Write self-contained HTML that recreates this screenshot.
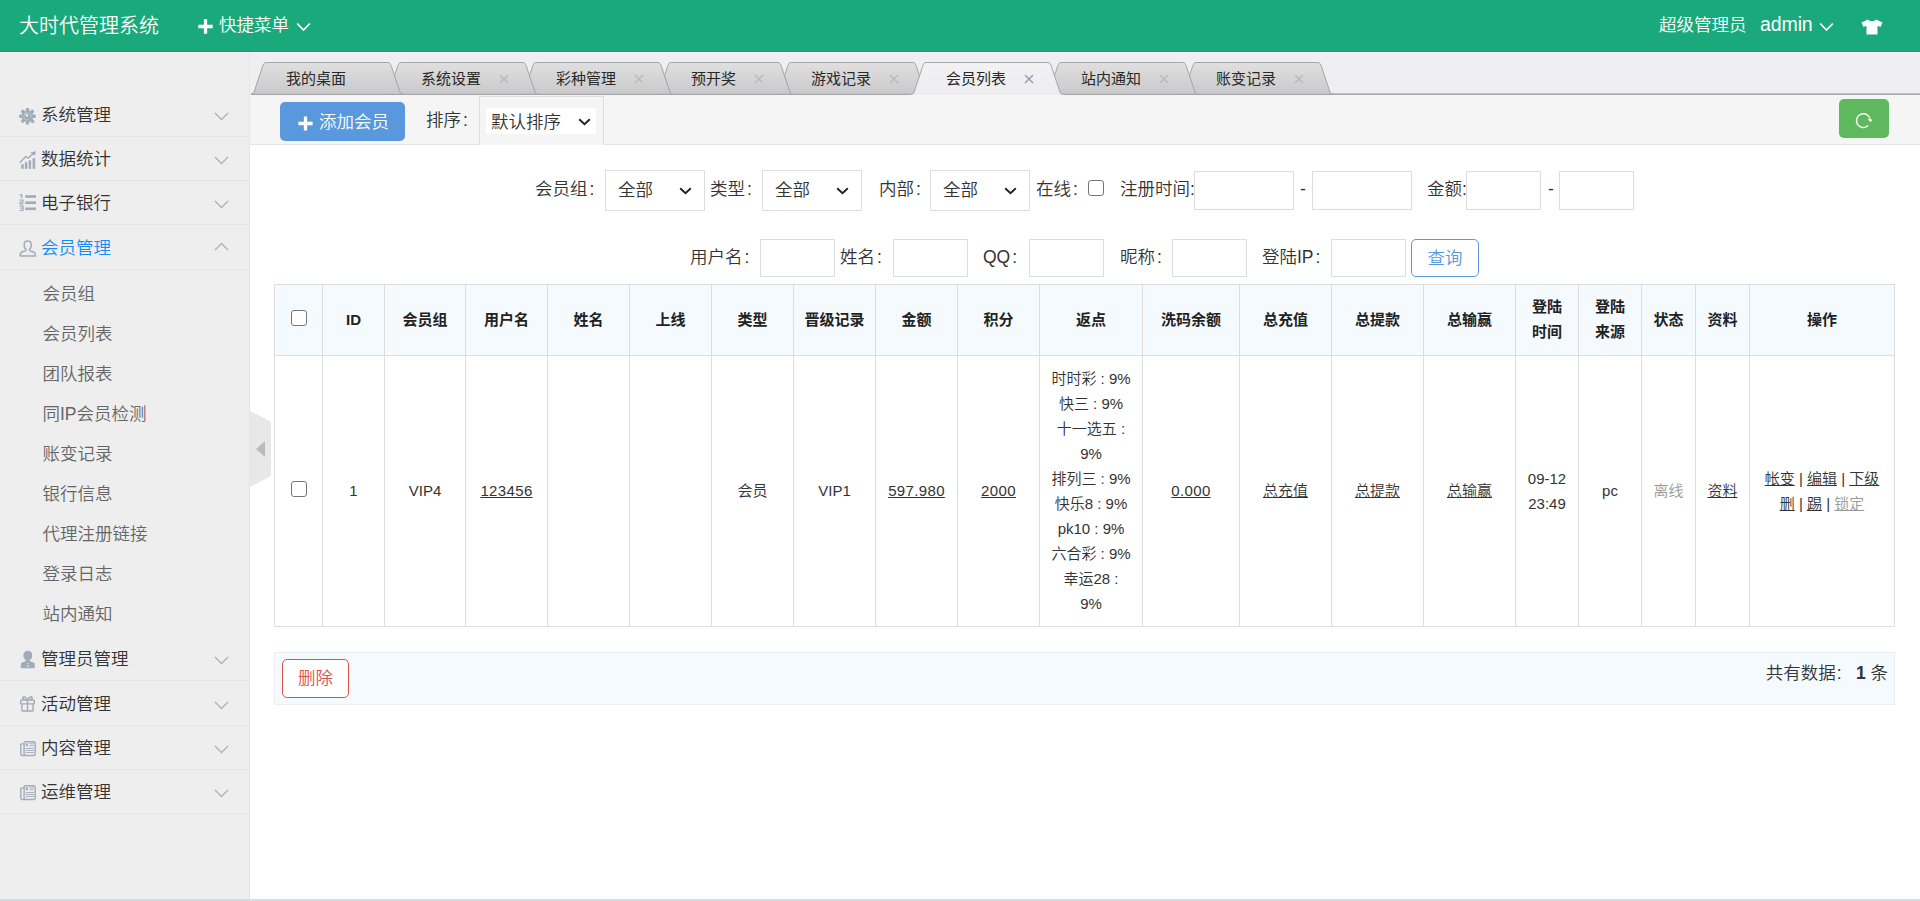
<!DOCTYPE html>
<html lang="zh-CN">
<head>
<meta charset="utf-8">
<title>大时代管理系统</title>
<style>
*{box-sizing:border-box;margin:0;padding:0}
html,body{width:1920px;height:901px;overflow:hidden;background:#fff}
body{font-family:"Liberation Sans","Noto Sans CJK SC",sans-serif;color:#333;font-size:17.5px;font-weight:350;position:relative}
.abs{position:absolute}
a{color:#333}
b{font-weight:700}
/* header */
#hd{position:absolute;left:0;top:0;width:1920px;height:52px;background:#1aa97b;color:#fff;border-bottom:1px solid #0ba374}
#hd .t{position:absolute;white-space:nowrap;color:#fff}
/* aside */
#aside{position:absolute;left:0;top:52px;width:250px;height:847px;background:#eee;border-right:1px solid #e5e5e5}
.dt{position:absolute;left:0;width:249px;height:44px;border-bottom:1px solid #e5e5e5}
.dt .tx{position:absolute;left:41px;top:0;line-height:44.5px;font-size:17.5px;color:#333;white-space:nowrap}
.dt.cur .tx{color:#148cf1}
.dt svg{position:absolute}
.sub{position:absolute;left:42.5px;font-size:17.5px;line-height:40px;color:#666;white-space:nowrap}
/* tabs */
#tabbar{position:absolute;left:250px;top:52px;width:1670px;height:43px;background:#efeef0}
#tabsvg{position:absolute;left:1px;top:0}
.tab{position:absolute;top:10px;font-weight:400;height:32px;line-height:34.5px;font-size:15px;color:#282828;white-space:nowrap}
/* toolbar */
#tool{position:absolute;left:250px;top:95px;width:1670px;height:50px;background:#f5f5f5;border-bottom:1px solid #e5e5e5}
.btn{position:absolute;border-radius:5px;font-size:17.5px;text-align:center;white-space:nowrap}
.lb{position:absolute;font-size:17.5px;line-height:24px;white-space:nowrap;color:#333}
.ipt{position:absolute;border:1px solid #ddd;background:#fff}
.sel{position:absolute;border:1px solid #ddd;background:#fff}
.sel span{position:absolute;left:12px;top:0;line-height:38px;font-size:17.5px}
svg{display:block}
.cb{position:absolute;width:16px;height:16px;border:1px solid #767676;border-radius:3px;background:#fff}
/* table */
#tb{position:absolute;left:274px;top:284px;border-collapse:collapse;table-layout:fixed;width:1620px;font-size:15px;color:#333}
#tb th,#tb td{border:1px solid #ddd;text-align:center;vertical-align:middle;line-height:25px;padding:0}
#tb th{background:#f5fafe;font-weight:bold;height:71px;color:#222;padding-bottom:2px}
#tb th .cb{top:-1.5px}
#tb td .cb{top:-1.5px}
.n{letter-spacing:.35px}
.c{margin-left:2px}
#tb td{height:271px;padding-bottom:1px}
#tb a{color:#333;text-decoration:underline}
#tb .g{color:#999}
#ft{position:absolute;left:274px;top:652px;width:1621px;height:53px;background:#f5fafe;border:1px solid #eee}
</style>
</head>
<body>

<!-- ================= header ================= -->
<div id="hd">
  <span class="t" style="left:19px;top:0;font-size:20px;line-height:52.5px">大时代管理系统</span>
  <svg class="abs" style="left:198px;top:19px" width="15" height="15" viewBox="0 0 15 15"><path d="M7.5 0.3v14.4M0.3 7.5h14.4" stroke="#fff" stroke-width="3.3" fill="none"/></svg>
  <span class="t" style="left:219px;top:0;font-size:17.5px;line-height:51px">快捷菜单</span>
  <svg class="abs" style="left:296px;top:21.5px" width="15" height="10" viewBox="0 0 15 10"><path d="M1.2 1.5L7.5 8L13.8 1.5" stroke="#fff" stroke-width="1.7" fill="none"/></svg>
  <span class="t" style="left:1659px;top:0;font-size:17.5px;line-height:50px">超级管理员</span>
  <span class="t" style="left:1760px;top:0;font-size:19.5px;line-height:48px;letter-spacing:-.1px">admin</span>
  <svg class="abs" style="left:1819px;top:21.5px" width="15" height="10" viewBox="0 0 15 10"><path d="M1.2 1.5L7.5 8L13.8 1.5" stroke="#fff" stroke-width="1.7" fill="none"/></svg>
  <svg class="abs" style="left:1861px;top:18.5px" width="22" height="16" viewBox="0 0 22 16"><path d="M7 0.5C8 2.6 14 2.6 15 0.5L21.5 3.5L19.5 8L16.5 6.8V15.5H5.5V6.8L2.5 8L0.5 3.5Z" fill="#fff"/></svg>
</div>

<!-- ================= aside ================= -->
<div id="aside">
  <div class="dt" style="top:41px"><svg style="left:19px;top:15px" width="17" height="17" viewBox="0 0 17 17"><g fill="#a2abb9"><circle cx="8.5" cy="8.3" r="5.7"/><rect x="6.8" y="0" width="3.4" height="16.6" rx="0.9" transform="rotate(0 8.5 8.3)"/><rect x="6.8" y="0" width="3.4" height="16.6" rx="0.9" transform="rotate(45 8.5 8.3)"/><rect x="6.8" y="0" width="3.4" height="16.6" rx="0.9" transform="rotate(90 8.5 8.3)"/><rect x="6.8" y="0" width="3.4" height="16.6" rx="0.9" transform="rotate(135 8.5 8.3)"/></g><circle cx="8.5" cy="8.3" r="3.7" stroke="#eee" stroke-width=".65" fill="none" opacity=".6"/><path d="M9.800 9.600L14 13.800" stroke="#a2abb9" stroke-width="2.800" stroke-linecap="round"/><path d="M8 7.600L6.300 5.500" stroke="#eee" stroke-width="1.100" opacity=".85"/><circle cx="8" cy="7.600" r="1.250" fill="#eee" opacity=".95"/></svg><span class="tx">系统管理</span><svg style="left:214px;top:19px" width="15" height="9" viewBox="0 0 15 9"><path d="M1 1L7.5 7.5L14 1" stroke="#b0b0b0" stroke-width="1.3" fill="none"/></svg></div>
  <div class="dt" style="top:85px"><svg style="left:19px;top:14px" width="18" height="18" viewBox="0 0 18 18"><g fill="#a2abb9"><rect x="2.2" y="13.3" width="2.5" height="4.5"/><rect x="5.9" y="11.2" width="2.4" height="6.6"/><rect x="9.7" y="9.3" width="2.4" height="8.5"/><rect x="13.6" y="7.2" width="2.6" height="10.6"/><path d="M11.2 1.5L16.9 0.2L15.7 4.7Z"/></g><path d="M1.2 11.3L6.8 5.6L9.3 7.1L14.6 2.2" stroke="#a2abb9" stroke-width="1.4" fill="none" stroke-linecap="round" stroke-linejoin="round"/></svg><span class="tx">数据统计</span><svg style="left:214px;top:19px" width="15" height="9" viewBox="0 0 15 9"><path d="M1 1L7.5 7.5L14 1" stroke="#b0b0b0" stroke-width="1.3" fill="none"/></svg></div>
  <div class="dt" style="top:129px"><svg style="left:19px;top:13px" width="18" height="18" viewBox="0 0 18 18"><g fill="#a2abb9"><rect x="6.2" y="1.2" width="10.8" height="2.6"/><rect x="6.2" y="7.4" width="10.8" height="2.6"/><rect x="6.2" y="13.5" width="10.8" height="2.6"/><path d="M0.6 0.2H3.4V4H1.9V1.4H0.6Z"/><path d="M0.5 5.4H4.6V8.4H1.9V9.3H4.6V10.4H0.5V7.4H3.2V6.5H0.5Z"/><path d="M0.5 11.6H4.6V17H0.5V15.9H3.2V14.8H1.2V13.8H3.2V12.7H0.5Z"/></g></svg><span class="tx">电子银行</span><svg style="left:214px;top:19px" width="15" height="9" viewBox="0 0 15 9"><path d="M1 1L7.5 7.5L14 1" stroke="#b0b0b0" stroke-width="1.3" fill="none"/></svg></div>
  <div class="dt cur" style="top:174px"><svg style="left:19px;top:13.5px" width="18" height="18" viewBox="0 0 18 18"><path d="M8.7 1C10.9 1 12.2 2.5 12.2 4.6C12.2 5.2 12.1 5.7 12 6C12.5 6.1 12.5 6.9 11.8 7.4C11.4 8.6 10.6 9.3 10.3 9.8C10.2 10.8 10.8 11.1 12.2 11.3C14.6 11.7 16.2 13.4 16.3 15.2C16.3 15.8 16 16 15.4 16H2C1.4 16 1.1 15.8 1.1 15.2C1.2 13.4 2.8 11.7 5.2 11.3C6.6 11.1 7.2 10.8 7.1 9.8C6.8 9.3 6 8.6 5.6 7.4C4.9 6.9 4.9 6.1 5.4 6C5.3 5.7 5.2 5.2 5.2 4.6C5.2 2.5 6.5 1 8.7 1Z" fill="none" stroke="#a2abb9" stroke-width="1.5" stroke-linejoin="round"/></svg><span class="tx">会员管理</span><svg style="left:214px;top:16px" width="15" height="9" viewBox="0 0 15 9"><path d="M1 8L7.5 1.5L14 8" stroke="#b0b0b0" stroke-width="1.3" fill="none"/></svg></div>
  <div class="dt" style="top:585px"><svg style="left:19px;top:13px" width="18" height="19" viewBox="0 0 18 19"><path d="M8.8 0.8C11.3 0.8 13.3 2.8 13.3 5.6C13.3 7.6 12.2 9.4 10.8 10.2V11C11.8 11.6 13.3 12 14.6 12.4C15.4 12.7 15.8 13.3 15.8 14.2V17.2C15.8 17.9 15.4 18.3 14.7 18.3H2.9C2.2 18.3 1.8 17.9 1.8 17.2V14.2C1.8 13.3 2.2 12.7 3 12.4C4.3 12 5.8 11.6 6.8 11V10.2C5.4 9.4 4.3 7.6 4.3 5.6C4.3 2.8 6.3 0.8 8.8 0.8Z" fill="#a2abb9"/><path d="M8.2 13H9.4V14H8.2ZM8.3 14.9H9.3L9.5 16.8L8.8 17.4L8.1 16.8Z" fill="#e4e6ea"/></svg><span class="tx">管理员管理</span><svg style="left:214px;top:19px" width="15" height="9" viewBox="0 0 15 9"><path d="M1 1L7.5 7.5L14 1" stroke="#b0b0b0" stroke-width="1.3" fill="none"/></svg></div>
  <div class="dt" style="top:630px"><svg style="left:19px;top:13px" width="18" height="18" viewBox="0 0 18 18"><g fill="none" stroke="#a2abb9" stroke-width="1.4" stroke-linejoin="round"><rect x="1.7" y="5" width="13.6" height="3.9" rx=".8"/><path d="M2.9 8.9V15.2C2.9 15.7 3.2 16 3.7 16H13.3C13.8 16 14.1 15.7 14.1 15.2V8.9"/><path d="M8.5 5V16"/><path d="M8.5 4.6C6.8 2.4 5 1.2 4 2.2C3.200 3.200 4.4 4.600 6.6 4.800M8.5 4.600C10.2 2.400 12 1.200 13 2.200C13.8 3.200 12.600 4.600 10.400 4.800"/></g></svg><span class="tx">活动管理</span><svg style="left:214px;top:19px" width="15" height="9" viewBox="0 0 15 9"><path d="M1 1L7.5 7.5L14 1" stroke="#b0b0b0" stroke-width="1.3" fill="none"/></svg></div>
  <div class="dt" style="top:674px"><svg style="left:19px;top:14px" width="18" height="18" viewBox="0 0 18 18"><g fill="none" stroke="#a2abb9" stroke-width="1.4" stroke-linejoin="round"><rect x="5.100" y="1.700" width="11.100" height="13.800" rx="1.500"/><path d="M5.100 3.900H2.800C2.200 3.900 1.800 4.300 1.800 4.900V14C1.800 14.900 2.400 15.500 3.300 15.500H6.500"/></g><g fill="#a2abb9"><rect x="6.800" y="3.300" width="2.100" height="3"/><rect x="10.300" y="3.300" width="4.600" height=".9"/><rect x="10.300" y="5.300" width="4.600" height=".9"/><rect x="6.600" y="8.100" width="8.400" height=".9"/><rect x="6.600" y="10.100" width="8.400" height=".9"/><rect x="6.600" y="12.100" width="8.400" height=".9"/></g></svg><span class="tx">内容管理</span><svg style="left:214px;top:19px" width="15" height="9" viewBox="0 0 15 9"><path d="M1 1L7.5 7.5L14 1" stroke="#b0b0b0" stroke-width="1.3" fill="none"/></svg></div>
  <div class="dt" style="top:718px"><svg style="left:19px;top:14px" width="18" height="18" viewBox="0 0 18 18"><g fill="none" stroke="#a2abb9" stroke-width="1.4" stroke-linejoin="round"><rect x="5.100" y="1.700" width="11.100" height="13.800" rx="1.500"/><path d="M5.100 3.900H2.800C2.200 3.900 1.800 4.300 1.800 4.900V14C1.800 14.900 2.400 15.500 3.300 15.500H6.500"/></g><g fill="#a2abb9"><rect x="6.800" y="3.300" width="2.100" height="3"/><rect x="10.300" y="3.300" width="4.600" height=".9"/><rect x="10.300" y="5.300" width="4.600" height=".9"/><rect x="6.600" y="8.100" width="8.400" height=".9"/><rect x="6.600" y="10.100" width="8.400" height=".9"/><rect x="6.600" y="12.100" width="8.400" height=".9"/></g></svg><span class="tx">运维管理</span><svg style="left:214px;top:19px" width="15" height="9" viewBox="0 0 15 9"><path d="M1 1L7.5 7.5L14 1" stroke="#b0b0b0" stroke-width="1.3" fill="none"/></svg></div>
  <div class="sub" style="top:222px">会员组</div>
  <div class="sub" style="top:262px">会员列表</div>
  <div class="sub" style="top:302px">团队报表</div>
  <div class="sub" style="top:342px">同IP会员检测</div>
  <div class="sub" style="top:382px">账变记录</div>
  <div class="sub" style="top:422px">银行信息</div>
  <div class="sub" style="top:462px">代理注册链接</div>
  <div class="sub" style="top:502px">登录日志</div>
  <div class="sub" style="top:542px">站内通知</div>
</div>
<svg class="abs" style="left:249px;top:410px" width="23" height="78" viewBox="0 0 23 78"><path d="M1 1L20 10.5Q22 11.5 22 13.5V64Q22 66 20 67L1 77Z" fill="#e8e8e8"/><path d="M7 39L16 31V47Z" fill="#bbb"/></svg>

<!-- ================= tab bar ================= -->
<div id="tabbar">
<svg id="tabsvg" width="1670" height="45" viewBox="0 0 1670 45">
<linearGradient id="tg" x1="0" y1="0" x2="0" y2="1"><stop offset="0" stop-color="#e0e0e0"/><stop offset="1" stop-color="#c9c9cb"/></linearGradient>
<linearGradient id="ta" x1="0" y1="0" x2="0" y2="1"><stop offset="0" stop-color="#f2f2f3"/><stop offset="1" stop-color="#ededef"/></linearGradient>
<rect x="0" y="41.3" width="1670" height="1.9" fill="#adadad"/>
<path d="M929.5 42.3C931.3 42.3 932.1 41.8 932.7 41.1L941.6 14.5C942.5 11.8 943.3 10.5 945.1 10.5L1066.9 10.5C1068.7 10.5 1069.5 11.8 1070.4 14.5L1079.3 41.1C1079.9 41.8 1080.7 42.3 1082.5 42.3Z" fill="url(#tg)" stroke="#a4a4a4" stroke-width="1"/>
<path d="M794.5 42.3C796.3 42.3 797.1 41.8 797.7 41.1L806.6 14.5C807.5 11.8 808.3 10.5 810.1 10.5L931.9 10.5C933.7 10.5 934.5 11.8 935.4 14.5L944.3 41.1C944.9 41.8 945.7 42.3 947.5 42.3Z" fill="url(#tg)" stroke="#a4a4a4" stroke-width="1"/>
<path d="M524.5 42.3C526.3 42.3 527.1 41.8 527.7 41.1L536.6 14.5C537.5 11.8 538.3 10.5 540.1 10.5L661.9 10.5C663.7 10.5 664.5 11.8 665.4 14.5L674.3 41.1C674.9 41.8 675.7 42.3 677.5 42.3Z" fill="url(#tg)" stroke="#a4a4a4" stroke-width="1"/>
<path d="M404.5 42.3C406.3 42.3 407.1 41.8 407.7 41.1L416.6 14.5C417.5 11.8 418.3 10.5 420.1 10.5L526.9 10.5C528.7 10.5 529.5 11.8 530.4 14.5L539.3 41.1C539.9 41.8 540.7 42.3 542.5 42.3Z" fill="url(#tg)" stroke="#a4a4a4" stroke-width="1"/>
<path d="M269.5 42.3C271.3 42.3 272.1 41.8 272.7 41.1L281.6 14.5C282.5 11.8 283.3 10.5 285.1 10.5L406.9 10.5C408.7 10.5 409.5 11.8 410.4 14.5L419.3 41.1C419.9 41.8 420.7 42.3 422.5 42.3Z" fill="url(#tg)" stroke="#a4a4a4" stroke-width="1"/>
<path d="M134.5 42.3C136.3 42.3 137.1 41.8 137.7 41.1L146.6 14.5C147.5 11.8 148.3 10.5 150.1 10.5L271.9 10.5C273.7 10.5 274.5 11.8 275.4 14.5L284.3 41.1C284.9 41.8 285.7 42.3 287.5 42.3Z" fill="url(#tg)" stroke="#a4a4a4" stroke-width="1"/>
<path d="M-0.5 42.3C1.3 42.3 2.1 41.8 2.7 41.1L11.6 14.5C12.5 11.8 13.3 10.5 15.1 10.5L136.9 10.5C138.7 10.5 139.5 11.8 140.4 14.5L149.3 41.1C149.9 41.8 150.7 42.3 152.5 42.3Z" fill="url(#tg)" stroke="#a4a4a4" stroke-width="1"/>
<path d="M659.5 42.3C661.3 42.3 662.1 41.8 662.7 41.1L671.6 14.5C672.5 11.8 673.3 10.5 675.1 10.5L796.9 10.5C798.7 10.5 799.5 11.8 800.4 14.5L809.3 41.1C809.9 41.8 810.7 42.3 812.5 42.3L812.5 45L659.5 45Z" fill="url(#ta)" stroke="none"/>
<path d="M659.5 42.3C661.3 42.3 662.1 41.8 662.7 41.1L671.6 14.5C672.5 11.8 673.3 10.5 675.1 10.5L796.9 10.5C798.7 10.5 799.5 11.8 800.4 14.5L809.3 41.1C809.9 41.8 810.7 42.3 812.5 42.3" fill="none" stroke="#a6a6a6" stroke-width="1"/>
</svg>
<span class="tab" style="left:36px">我的桌面</span>
<span class="tab" style="left:171px">系统设置</span>
<svg class="abs" style="left:249px;top:22px" width="10" height="10" viewBox="0 0 10 10"><path d="M1 1L9 9M9 1L1 9" stroke="#b3bcc9" stroke-width="1.7" fill="none"/></svg>
<span class="tab" style="left:306px">彩种管理</span>
<svg class="abs" style="left:384px;top:22px" width="10" height="10" viewBox="0 0 10 10"><path d="M1 1L9 9M9 1L1 9" stroke="#b3bcc9" stroke-width="1.7" fill="none"/></svg>
<span class="tab" style="left:441px">预开奖</span>
<svg class="abs" style="left:504px;top:22px" width="10" height="10" viewBox="0 0 10 10"><path d="M1 1L9 9M9 1L1 9" stroke="#b3bcc9" stroke-width="1.7" fill="none"/></svg>
<span class="tab" style="left:561px">游戏记录</span>
<svg class="abs" style="left:639px;top:22px" width="10" height="10" viewBox="0 0 10 10"><path d="M1 1L9 9M9 1L1 9" stroke="#b3bcc9" stroke-width="1.7" fill="none"/></svg>
<span class="tab" style="left:696px">会员列表</span>
<svg class="abs" style="left:774px;top:22px" width="10" height="10" viewBox="0 0 10 10"><path d="M1 1L9 9M9 1L1 9" stroke="#9aa3b5" stroke-width="1.7" fill="none"/></svg>
<span class="tab" style="left:831px">站内通知</span>
<svg class="abs" style="left:909px;top:22px" width="10" height="10" viewBox="0 0 10 10"><path d="M1 1L9 9M9 1L1 9" stroke="#b3bcc9" stroke-width="1.7" fill="none"/></svg>
<span class="tab" style="left:966px">账变记录</span>
<svg class="abs" style="left:1044px;top:22px" width="10" height="10" viewBox="0 0 10 10"><path d="M1 1L9 9M9 1L1 9" stroke="#b3bcc9" stroke-width="1.7" fill="none"/></svg>
</div>

<!-- ================= toolbar ================= -->
<div id="tool">
  <div class="btn" style="left:30px;top:7px;width:125px;height:39px;background:#5a98de;color:#fff;line-height:40px;text-align:left"><svg class="abs" style="left:18px;top:14px" width="15" height="15" viewBox="0 0 15 15"><path d="M7.5 0.4v14.2M0.4 7.5h14.2" stroke="#fff" stroke-width="3.3" fill="none"/></svg><span class="abs" style="left:39px;top:0">添加会员</span></div>
  <span class="lb" style="left:176px;top:13px">排序<span class="c">:</span></span>
  <div class="abs" style="left:229px;top:1px;width:125px;height:49px;border:1px solid #ddd;border-bottom:none;background:#f5f5f5"></div>
  <div class="abs" style="left:236px;top:13px;width:110px;height:26px;background:#fff"><span class="abs" style="left:5px;top:0;line-height:28px;font-size:17.5px">默认排序</span><span class="abs" style="left:92px;top:9.75px;line-height:0"><svg width="13" height="8" viewBox="0 0 13 8"><path d="M1.2 1.2L6.5 6.3L11.8 1.2" stroke="#222" stroke-width="1.9" fill="none"/></svg></span></div>
  <div class="btn" style="left:1589px;top:4px;width:50px;height:39px;background:#5eb95e"><svg class="abs" style="left:0;top:0" width="50" height="39" viewBox="0 0 50 39"><path d="M29.2 26.6A6.9 6.9 0 1 1 31.2 20.6" stroke="#fff" stroke-width="1.35" fill="none"/><path d="M28.5 20L33.4 20.4L31.6 23.3Z" fill="#fff"/></svg></div>
</div>

<!-- ================= filter ================= -->
<div id="filter">
<span class="lb" style="left:535px;top:177px;">会员组<span class="c">:</span></span>
<div class="sel" style="left:605px;top:170px;width:100px;height:41px"><span>全部</span><span class="abs" style="left:auto;right:12px;top:16px;line-height:0"><svg width="13" height="8" viewBox="0 0 13 8"><path d="M1.2 1.2L6.5 6.3L11.8 1.2" stroke="#222" stroke-width="1.9" fill="none"/></svg></span></div>
<span class="lb" style="left:710px;top:177px;">类型<span class="c">:</span></span>
<div class="sel" style="left:762px;top:170px;width:100px;height:41px"><span>全部</span><span class="abs" style="left:auto;right:12px;top:16px;line-height:0"><svg width="13" height="8" viewBox="0 0 13 8"><path d="M1.2 1.2L6.5 6.3L11.8 1.2" stroke="#222" stroke-width="1.9" fill="none"/></svg></span></div>
<span class="lb" style="left:879px;top:177px;">内部<span class="c">:</span></span>
<div class="sel" style="left:930px;top:170px;width:100px;height:41px"><span>全部</span><span class="abs" style="left:auto;right:12px;top:16px;line-height:0"><svg width="13" height="8" viewBox="0 0 13 8"><path d="M1.2 1.2L6.5 6.3L11.8 1.2" stroke="#222" stroke-width="1.9" fill="none"/></svg></span></div>
<span class="lb" style="left:1036px;top:177px;">在线<span class="c">:</span></span>
<div class="cb" style="left:1088px;top:180px"></div>
<span class="lb" style="left:1120px;top:177px;">注册时间<span>:</span></span>
<div class="ipt" style="left:1194px;top:171px;width:100px;height:39px"></div>
<span class="lb" style="left:1300px;top:177px;">-</span>
<div class="ipt" style="left:1312px;top:171px;width:100px;height:39px"></div>
<span class="lb" style="left:1427px;top:177px;">金额<span>:</span></span>
<div class="ipt" style="left:1466px;top:171px;width:75px;height:39px"></div>
<span class="lb" style="left:1548px;top:177px;">-</span>
<div class="ipt" style="left:1559px;top:171px;width:75px;height:39px"></div>
<span class="lb" style="left:690px;top:245px;">用户名<span class="c">:</span></span>
<div class="ipt" style="left:760px;top:239px;width:75px;height:38px"></div>
<span class="lb" style="left:840px;top:245px;">姓名<span class="c">:</span></span>
<div class="ipt" style="left:893px;top:239px;width:75px;height:38px"></div>
<span class="lb" style="left:983px;top:245px;">QQ<span class="c">:</span></span>
<div class="ipt" style="left:1029px;top:239px;width:75px;height:38px"></div>
<span class="lb" style="left:1120px;top:245px;">昵称<span class="c">:</span></span>
<div class="ipt" style="left:1172px;top:239px;width:75px;height:38px"></div>
<span class="lb" style="left:1262px;top:245px;">登陆IP<span class="c">:</span></span>
<div class="ipt" style="left:1331px;top:239px;width:75px;height:38px"></div>
<div class="btn" style="left:1411px;top:239px;width:68px;height:38px;border:1px solid #5a98de;color:#5a98de;background:#fff;line-height:36px">查询</div>
</div>
<!-- ================= table ================= -->
<table id="tb">
<colgroup><col style="width:48px"><col style="width:62px"><col style="width:81px"><col style="width:82px"><col style="width:82px"><col style="width:82px"><col style="width:82px"><col style="width:82px"><col style="width:82px"><col style="width:82px"><col style="width:103px"><col style="width:97px"><col style="width:92px"><col style="width:92px"><col style="width:92px"><col style="width:63px"><col style="width:63px"><col style="width:54px"><col style="width:54px"><col style="width:145px"></colgroup>
<thead><tr><th><div class="cb" style="position:relative;margin:0 auto"></div></th><th>ID</th><th>会员组</th><th>用户名</th><th>姓名</th><th>上线</th><th>类型</th><th>晋级记录</th><th>金额</th><th>积分</th><th>返点</th><th>洗码余额</th><th>总充值</th><th>总提款</th><th>总输赢</th><th>登陆<br>时间</th><th>登陆<br>来源</th><th>状态</th><th>资料</th><th>操作</th></tr></thead>
<tbody><tr><td><div class="cb" style="position:relative;margin:0 auto"></div></td><td>1</td><td>VIP4</td><td><a class="n">123456</a></td><td></td><td></td><td>会员</td><td>VIP1</td><td><a class="n">597.980</a></td><td><a class="n">2000</a></td><td>时时彩 : 9%<br>快三 : 9%<br>十一选五 :<br>9%<br>排列三 : 9%<br>快乐8 : 9%<br>pk10 : 9%<br>六合彩 : 9%<br>幸运28 :<br>9%</td><td><a class="n">0.000</a></td><td><a>总充值</a></td><td><a>总提款</a></td><td><a>总输赢</a></td><td>09-12<br>23:49</td><td>pc</td><td><span class="g">离线</span></td><td><a>资料</a></td><td><a>帐变</a> | <a>编辑</a> | <a>下级</a><br><a>删</a> | <a>踢</a> | <a class="g">锁定</a></td></tr></tbody>
</table>
<!-- ================= footer bar ================= -->
<div id="ft">
<div class="btn" style="left:7px;top:6px;width:67px;height:39px;border:1px solid #dd514c;color:#dd514c;background:#fff;line-height:37px">删除</div>
<span class="lb" style="right:6px;top:8px">共有数据<span style="margin:0 9.5px 0 1px">:</span> <b>1</b> 条</span>
</div>

<div class="abs" style="left:0;top:52px;width:1920px;height:1px;background:#faf2f7"></div>
<!-- bottom strip -->
<div class="abs" style="left:0;top:899px;width:1920px;height:2px;background:#d3dbe4"></div>
</body>
</html>
